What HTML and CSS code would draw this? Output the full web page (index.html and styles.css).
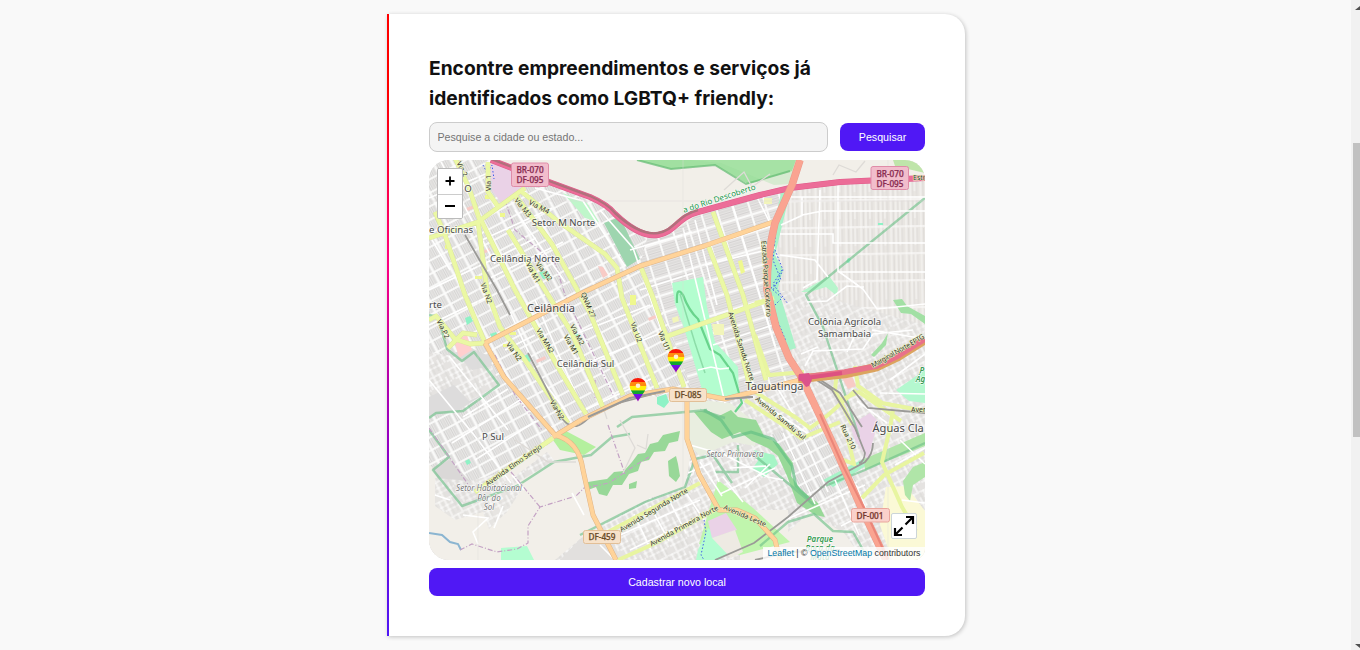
FILE: index.html
```html
<!DOCTYPE html>
<html lang="pt-BR">
<head>
<meta charset="utf-8">
<title>Mapa LGBTQ+ friendly</title>
<link rel="stylesheet" href="styles.css">
</head>
<body>
<div class="page">
<main class="content">
<section class="card">
<h2 class="title">Encontre empreendimentos e serviços já identificados como LGBTQ+ friendly:</h2>
<form class="search">
<input class="search-input" type="text" placeholder="Pesquise a cidade ou estado...">
<button class="button search-button" type="button">Pesquisar</button>
</form>
<div class="map">
<svg class="map-canvas" viewBox="429 160 496 400" width="496" height="400">
<defs>
<pattern id="blocksWest" width="17" height="12" patternUnits="userSpaceOnUse" patternTransform="rotate(-28)">
<rect width="17" height="12" fill="#fdfdfc"/><path d="M.8 .8h15.400v10.400H.8z" fill="#eae9e8"/><path d="M2.500 1v10M4.800 1v10M7.100 1v10M9.400 1v10M11.700 1v10M14 1v10" stroke="#d0cfce" stroke-width=".9"/>
</pattern>
<pattern id="blocksMid" width="16" height="17" patternUnits="userSpaceOnUse" patternTransform="rotate(-17)">
<rect width="16" height="17" fill="#fafaf9"/><path d="M1 1h14v15H1z" fill="#e6e4e3"/><path d="M1 3.500h14M1 6h14M1 8.500h14M1 11h14M1 13.500h14" stroke="#d0cfce" stroke-width=".8"/>
</pattern>
<pattern id="blocksEast" width="15" height="27" patternUnits="userSpaceOnUse" patternTransform="rotate(-1)">
<rect width="15" height="27" fill="#e9e6e2"/><path d="M2 0v27M7 0v27M11 0v18" stroke="#fbfbfa" stroke-width=".8"/><path d="M4.500 1v24M9 1v24M13 1v24" stroke="#dad8d6" stroke-width=".8"/><path d="M0 26h15" stroke="#fff" stroke-width="1"/>
</pattern>
<pattern id="blocksLoose" width="23" height="19" patternUnits="userSpaceOnUse" patternTransform="rotate(-27)">
<rect width="23" height="19" fill="#e5e3e1"/><path d="M0 1h23M0 7h15M4 12h19M2 0v12M8 1v18M14 0v8M19 6v13" stroke="#fff" stroke-width="1" fill="none"/><path d="M5 2v9M11 2v16M16 8v9M21 1v17" stroke="#d6d4d3" stroke-width=".7"/>
</pattern>
<linearGradient id="rainbow" x1="0" y1="0" x2="0" y2="1">
<stop offset=".17" stop-color="#fa1a08"/><stop offset=".19" stop-color="#ff8a10"/><stop offset=".34" stop-color="#ff8a10"/><stop offset=".36" stop-color="#fff00a"/><stop offset=".52" stop-color="#fff00a"/><stop offset=".54" stop-color="#12a62f"/><stop offset=".67" stop-color="#12a62f"/><stop offset=".69" stop-color="#6b12f0"/><stop offset="1" stop-color="#9b00b0"/>
</linearGradient>
<g id="pin"><path d="M0 11.500C-2 7-8.300 1-8.300-4C-8.300-9-4.500-12 0-12S8.300-9 8.300-4C8.300 1 2 7 0 11.500Z" fill="url(#rainbow)"/><circle cy="-4.300" r="2.300" fill="#fff0d8"/></g>
</defs>

<!-- built-up areas -->
<path d="M429 160h496v400H429z" fill="url(#blocksWest)"/>
<path d="M648 235L710 205 790 187 768 250 772 325 800 378 760 425 725 405 692 390 670 330 640 265z" fill="url(#blocksMid)"/>
<path d="M782 189L925 179V340L850 368 802 374 782 345 770 290z" fill="url(#blocksEast)"/>
<path d="M770 290L810 293 925 325V340L860 368 802 374z" fill="url(#blocksLoose)" opacity=".8"/>
<path d="M735 398L802 378 925 340V560H690V500L700 430z" fill="url(#blocksLoose)"/>
<path d="M770 435l44-15 45 65-48 22z" fill="url(#blocksWest)"/>
<path d="M429 360l42-12 18 8 10 29-40 25-30 7z" fill="#dddcdc"/>
<path d="M429 352l30 5 13 13 20-4 7 20-30 15-15-16-25 12z" fill="url(#blocksLoose)"/>

<!-- open land -->
<path d="M490 160H925V178L790 187 700 211Q675 237 650 233 630 226 610 206 570 190 530 177z" fill="#f2efe9"/>
<path d="M438 160h56l8 15-8 12-10-5z" fill="url(#blocksWest)"/>
<path d="M429 465L475 494 555 440 590 415 640 395 690 400V458L685 488 650 498 590 532 560 560H429z" fill="#f2efe9"/>
<path d="M432 468l18-8 32 34-10 10-19 3z" fill="#dad8d7"/>
<path d="M435 478l35 3 30-8 22 16-15 23-18 17-6-17-28 8-20-14z" fill="url(#blocksLoose)" opacity=".85"/>
<path d="M510 480l37-28 8 9-45 25z" fill="url(#blocksLoose)"/>
<path d="M555 560l30-25 65-35 40-15 30 25 10 50z" fill="url(#blocksLoose)"/>
<path d="M560 560l20-21 30-8 10 29z" fill="#e2e0de"/>
<path d="M690 399l40 4 30 23-5 20-22-4-33 14-12-12z" fill="#e9eee0"/>
<path d="M740 510l48 0 0 22 22-20 35 22 18 26H740z" fill="#f2efe9"/>
<path d="M886 487l20-1 19 25v49h-33l-12-35z" fill="#fbf9d6"/>
<path d="M896 390l29-20v33l-16-2z" fill="#b4f8cf"/>
<path d="M490 163l22 6 13 18-23 17-11-15z" fill="#ead2e7"/>
<path d="M604 223l16-6 20 42-13 8z" fill="#9ed5af"/>
<path d="M637 160l34 9 44-4 33 19 44-13 4-11z" fill="#a1e0a1"/>
<path d="M690 160h106l-6 24-16 1-53-22z" fill="#b0e5ad" opacity=".4"/>
<path d="M637 160l34 9 44-4 31 19 44-13" fill="none" stroke="#68bd77" stroke-width="2" opacity=".75"/>
<path d="M893 160h24l8 9v4l-30-7z" fill="#bfe5aa"/>
<path d="M563 193l24 10 12 19-14-4z" fill="#bff6ca"/>
<path d="M782 189l7 8-14 58 8 15-5 18 18 60-9 3-18-51v-55z" fill="#aaf2c9"/>
<path d="M801 292l28-16 9 12-1 8-11-9-16 5z" fill="#b7f5cc"/>
<path d="M672 283l31-6 4 30 8 35 23 25 1 29-18 5-18-8-18-62-10-27z" fill="#b3fdcf"/>
<path d="M677 303q-1-18 6-8 6 16 15 24l12 30 10 6 13 18 9 30-7 9" fill="none" stroke="#69d48c" stroke-width="2.200"/>
<path d="M680 294l15 49 10 30" fill="none" stroke="#8cdda8" stroke-width="1.500"/>
<path d="M698 370l13-3 9 2 9-1" fill="none" stroke="#fff" stroke-width="1.500"/>
<path d="M694 412l12-2 13 6 12-6 7 7 18 3 8 16 15 8 14 19-2 13 10 14 17 13 7 14-10-2-18-12-10-27-9-20-10-8-16-7-12-9-18 7-11-7-7-8z" fill="#98d998"/>
<path d="M704 410l17 10 12 17 18-5 22 7 19 27 4 20 14 14" fill="none" stroke="#65c185" stroke-width="3" opacity=".7"/>
<path d="M754 450l20 5 4 9-14 13-12-8 6-8z" fill="#a6f5c6"/>
<path d="M588 482l12-2 7-1 7-7 10-1 8-9 6-8 7-1 5-9 8-2 5-7 17-4-2 10-9 2-4 8-11 1-5 8-8 2-3 9-9 3-7 11-9 0-6 11-8-2-3-7-8 3zM668 461l8-5 2 8 2 12-4 6-7-6zM629 484l8-3-1 7-7 1z" fill="#98d898"/>
<path d="M553 440l13-9 30 16-12 8-24-5z" fill="#b4f09e"/>
<path d="M501 548l26-2 7 14h-33z" fill="#b4fdd1"/>
<path d="M718 480l35 28 37 34-50 13-41-11z" fill="#c0f5ad"/>
<path d="M698 550l10-22 27 20-16 12h-23z" fill="#b4fdd1"/>
<path d="M708 521l18-8 11 17-25 8z" fill="#ead2e7"/>
<path d="M712 538l23-8 8 22-12 6z" fill="#eeeae3"/>
<path d="M823 480l40-21 7 4-37 24z" fill="#a7f3c8"/>
<path d="M864 459l61-26v13l-60 24zM903 481l10-14 12-5v15l-12 8-3 16-5-6z" fill="#b0e5a8"/>
<path d="M850 425l20-12 8 8-10 38-13-19z" fill="#ead2e7"/>
<path d="M454 340l13-5 5 15-13 8z" fill="#ffcfce"/>
<path d="M882 343l6-10-2 12-12 12-3-2zM893 300l9-1 5 7 18 10v8l-14-10-10-1z" fill="#a2e0a4"/>
<g fill="#8ef2c6"><path d="M539 272l9-1 2 7-7 1zM465 318l5-2 3 5-6 4zM490 334l6-2 3 5-6 4zM522 357l6-3 3 7-6 3zM569 331l7-3 3 8-7 4zM657 397l9-3 3 8-5 6-7-4zM861 179h3v3h-3zM878 223h5v2h-5zM848 258l3 1-2 4-3-1zM465 461l4-2 2 4-4 2z"/></g>
<g fill="#eff88f"><path d="M455 175h6v4h-6zM485 195h7v4h-7zM500 213h5v4h-5zM445 245h6v4h-6zM475 276h7v3h-7zM510 332h6v3h-6zM630 295h6v10h-6zM738 261l4-1 3 12-4 2zM503 344h6v3h-6z"/></g>
<path d="M712 324h12v11h-10zM764 198h8v6h-8zM672 318l6-2 1 5-6 2z" fill="#f2f5ba"/>
<g fill="#f8cbc6"><path d="M466 208l11-4 1 3-11 4zM480 252l9-4 1 3-9 4zM538 309l11-4 1 3-11 4zM536 360l9-4 1 3-9 4zM598 266l5 1 5 8-5 3zM648 318l10-4 1 3-10 4zM842 378l10-2 4 10-8 3z"/></g>

<!-- protected area limits -->
<g fill="none" stroke="#72c28c" stroke-width="2.400" opacity=".65" stroke-linejoin="round">
<path d="M429 315l9 2 9 32 15 12 12-9 25 33-36 26-27 2-7 5"/>
<path d="M429 430l20 27-16 13 29 36 55-20 37-24 37-7 21-18 18-3M617 427l15-10 75-7M580 535l65-33 40-15 10-28 18-4 19 28M700 410l25 8M760 546l28-24 26-8 19 17 20 1 13 23M754 455l60 50"/>
<path d="M925 198L806 295l17 32 36 110M925 443L865 470l-45 18M738 445v27h-23"/>
</g>
<path d="M429 533l13 2 8 7 8 2 3 6" fill="none" stroke="#8bb5d1" stroke-width="2"/>
<g fill="none" stroke="#c3a1c4" stroke-width="1.200" stroke-dasharray="5 2 1 2">
<path d="M460 550l12-6 25 8 20-3 11-6 0-17 12-19 36-11 8-8 25-5 22-15 18-11M511 472l29 35M429 428l43 62M595 380v20M495 355l20 40 27 35M608 425l17 49M505 200l10 30 40 33 10 32 48 100"/>
</g>
<g fill="none" stroke="#4160e8" stroke-width="1" stroke-dasharray="1.500 2"><path d="M777 220l-4 40 8 20-10 8 11 10-10 10 14 33M782 270l-9 14 15 20M704 520l2 12-5 23 3 5"/><path d="M483 165l4 8 5-8 2 14M775 250l8 20-10 20"/></g>

<!-- side streets -->
<g fill="none" stroke="#fff" stroke-width="1.600">
<path d="M429 198l59-25M429 290l71-34 36-18M440 160l55 104M450 270l-21-35M482 240l70-32M490 278l73-36M515 210l50 72M535 188l48 13 42 65M429 325l58-28M449 356l59 74M463 417l45-28M429 380l45 55 37 48M452 443l68-43M475 460l61-39M505 350l30-15M510 312l30 65 25 33M535 300l48 110M560 340l90-35M570 370l93-38M585 410l70-33M600 210l33 38 30 87M630 250l62-18M640 290l54-17M683 228l42 175M695 220l22 85M733 206l42 140M757 197l15 30M705 265l70-17M713 345l60-20"/>
<path d="M790 197h135M802 197v18l20-4h103M780 234h53v9h92M838 179v92l25 18 14 20 48-5M838 272h87M820 190l-3 90-14 8M803 215l-22 10M780 255l35 5 13 17M807 302l20-1 20-15 17 1M805 366l8-15 50-2 10-15 40-4M818 347l-17 7M847 352l10-21M872 330l53 9M890 380l35-26M862 392l33 28M857 401l30 22M880 393l45 1"/>
<path d="M783 433l32 71M798 426l30 66M765 405l45 30 15-5M756 391l25 35M775 384l23 38M785 520l80-35M835 480l24 55M856 485l25 60M870 511l-29 15M900 440l25 24M895 465l30-17M902 500l23 3M690 445l35 10 43 22 15 3M745 488l25-24M730 468l36-2M723 477l20 25M720 494l55-26M634 514l17 36M650 506l19 35M668 498l18 35M684 490l20 30M620 535l80-35M630 550l77-37M600 545l15 15M688 473l23-10 8 19M700 462l22 34M512 475l12 15M503 506l-9 22M463 515l25 3-15 14 5 12M450 500l-15-5M584 515l-12-22"/>
</g>
<g fill="none" stroke="#dedbd7" stroke-width="1.300"><path d="M429 201h254M683 160v400M683 201h242M888 160v400M478 160v400" opacity=".3"/><path d="M620 420l15 28-12 25M637 445l9 4 2-15M515 440l33 22 28 0M590 390l12 14 5 15M724 190l20-18 8 15 18-13M833 175l6-10 17 7 9-11"/></g>

<!-- avenues -->
<path d="M455 158l14 30 11 33M488 162v30l11 16M429 238l49-16 37-27 10-7M435 212l10 23 20 60 20 48M478 222l9 68 13 37 25 33 43 63M480 218l35 72 43 77 28 47M508 230l37 60 27 43 32 77M515 195l37 49 38 69 33 82M522 192l37 30 46 32 12 14 5 30 35 90M640 265l12 30 32 92M708 245l19 50 23 92M713 212l30 83 23 85M665 337l95-34 14-5M429 320l7-4 19 23 15 5 15-1M448 348l15-15 14 2M475 492l78-54" fill="none" stroke="#dbe69b" stroke-width="4.800" stroke-linejoin="round"/>
<path d="M455 158l14 30 11 33M488 162v30l11 16M429 238l49-16 37-27 10-7M435 212l10 23 20 60 20 48M478 222l9 68 13 37 25 33 43 63M480 218l35 72 43 77 28 47M508 230l37 60 27 43 32 77M515 195l37 49 38 69 33 82M522 192l37 30 46 32 12 14 5 30 35 90M640 265l12 30 32 92M708 245l19 50 23 92M713 212l30 83 23 85M665 337l95-34 14-5M429 320l7-4 19 23 15 5 15-1M448 348l15-15 14 2M475 492l78-54" fill="none" stroke="#ebf8a4" stroke-width="4"/>
<g fill="none" stroke="#e8f5a0" stroke-width="4"><path d="M755 303l13-3M755 335l14 40 35-3M755 392l40 25 15 11 18-13 28-25M802 438l38-16M745 400l43 28 14 11M855 366l3 20 24 17 43 8M837 370l-2 20 17 35M840 400l19-8 42 29M893 410l-3 18-8 34 20 45 14 24M862 498l22-23 40-22M608 532l92-49M618 560l40-18 58-33M825 428l16 31 13 5-6-25"/></g>

<!-- railways -->
<path d="M465 235l32 55 13 25M528 353l29 56q7 18 20 17c11-3 14-16 34-21l54-14M725 398l28-1M812 377l20 13 23 38 10 25q-1 9-6 10M816 377l24 16 22 34M715 560l39-17 34-26 40-35 37-20q8-8 8-19M853 390l15 18 57 5M755 560l35-8 50-2" fill="none" stroke="#9b9a97" stroke-width="1.800"/>

<!-- highways -->
<g fill="none" stroke-linejoin="round">
<g stroke="#dfb488" stroke-width="5"><path d="M485 343l101-52 54-25 64-20 69-24M485 343l19 34 51 58M553 437l28-17 49-24 43-7 52 10 67-17 16-4M687 394v45l12 35 20 36h18l18 8 20 22 5 20M555 435q24 6 28 35l10 45 23 45"/></g>
<g stroke="#ffd399" stroke-width="4"><path d="M485 343l101-52 54-25 64-20 69-24M485 343l19 34 51 58M553 437l28-17 49-24 43-7 52 10 67-17 16-4M687 394v45l12 35 20 36h18l18 8 20 22 5 20M555 435q24 6 28 35l10 45 23 45"/></g>
<path d="M588 417l42-19 35-7M725 399l27-2" stroke="#999" stroke-width="2"/>
<path d="M491 160l39 15 60 22q18 8 25 17 25 24 43 21c17-3 20-18 40-23l62-17 30-7 50-6 85-4" stroke="#e05a8a" stroke-width="6"/>
<path d="M491 160l39 15 60 22q18 8 25 17 25 24 43 21c17-3 20-18 40-23l62-17 30-7 50-6 85-4" stroke="#ec6d98" stroke-width="5"/>
<path d="M491 159l39 15 60 22q18 8 25 17 25 23 43 20c17-3 20-18 40-23" stroke="#b0707c" stroke-width="2.400"/>
<path d="M800 160l-8 25-17 38q-8 32-8 67l9 37 13 31 13 20 33 70 25 57 26 55" stroke="#ea9a8c" stroke-width="7.500"/>
<path d="M800 160l-8 25-17 38q-8 32-8 67l9 37 13 31 13 20 33 70 25 57 26 55" stroke="#faa491" stroke-width="6.500"/>
<path d="M820 414l23 52 23 46 22 48" stroke="#df7169" stroke-width="2" opacity=".6"/>
<path d="M798 379l47-5 32-7 21-10 27-17" stroke="#dca45f" stroke-width="8.500"/>
<path d="M798 378l47-6 32-6 21-10 27-17" stroke="#e8718a" stroke-width="5.500"/>
<path d="M799 379l43-6" stroke="#dd5281" stroke-width="4"/>
<path d="M799 374l10-1 3 7-3 6-3 1-7-9z" fill="#db528b"/>
</g>

<!-- road shields -->
<g class="shield shield-pink"><rect x="511.500" y="163" width="37" height="23.500" rx="2"/><rect x="871" y="166.500" width="37.500" height="23" rx="2"/><text x="530" y="173">BR-070</text><text x="530" y="182.800">DF-095</text><text x="890" y="177.200">BR-070</text><text x="890" y="187">DF-095</text></g>
<g class="shield shield-tan"><rect x="669.500" y="388.500" width="37" height="13" rx="2"/><rect x="583.500" y="530.500" width="37" height="13" rx="2"/><text x="688" y="398">DF-085</text><text x="602" y="540">DF-459</text></g>
<g class="shield shield-red"><rect x="851.500" y="508.500" width="38" height="13.500" rx="2"/><text x="870" y="518.500">DF-001</text></g>

<!-- place names -->
<g class="place">
<text x="563.500" y="225.500">Setor M Norte</text><text x="525" y="262">Ceilândia Norte</text><text class="large" x="551" y="311.500">Ceilândia</text><text x="585.500" y="366.500">Ceilândia Sul</text><text x="493" y="440">P Sul</text><text x="844.500" y="324.500">Colônia Agrícola</text><text x="844.500" y="337">Samambaia</text><text class="large" x="774.500" y="390">Taguatinga</text><text class="large start" x="872.500" y="431.500">Águas Cla</text><text class="start" x="429" y="233">e Oficinas</text><text class="start" x="429" y="308">rte</text><text x="468" y="191.500">O</text>
</g>
<g class="suburb"><text x="735" y="457">Setor Primavera</text><text x="489" y="491">Setor Habitacional</text><text x="489" y="500.500">Pôr do</text><text x="489" y="510">Sol</text></g>
<g class="park"><text x="820" y="542">Parque</text><text x="820" y="550.500">Boca da</text><text x="820" y="559.500">Mata</text><text x="922" y="373">P</text><text x="920.500" y="382">Ág</text></g>
<g class="street">
<text transform="translate(491 183) rotate(-90)">Via 1</text><text transform="translate(460 170) rotate(63)">Via 2</text><text transform="translate(521 209) rotate(51)">Via M3</text><text transform="translate(538 209) rotate(28)">Via M4</text><text transform="translate(531 274) rotate(61)">Via M1</text><text transform="translate(542 273) rotate(52)">Via M2</text><text transform="translate(484 294) rotate(70)">Via N2</text><text transform="translate(441 330) rotate(64)">Via P2</text><text transform="translate(512 353) rotate(54)">Via N2</text><text transform="translate(543 342) rotate(59)">Via MN2</text><text transform="translate(569 346) rotate(60)">Via M1</text><text transform="translate(575 336) rotate(61)">Via M2</text><text transform="translate(586 306) rotate(67)">QNM 27</text><text transform="translate(634 333) rotate(70)">Via U2</text><text transform="translate(662 342) rotate(67)">Via U1</text><text transform="translate(555 411) rotate(60)">Via N2</text>
<text transform="translate(739 347) rotate(72)">Avenida Samdu Norte</text><text transform="translate(779 420) rotate(40)">Avenida Samdu Sul</text><text transform="translate(846 438) rotate(64)">Rua 210</text><text transform="translate(515 467) rotate(-35)">Avenida Elmo Serejo</text><text transform="translate(655 512) rotate(-31)">Avenida Segunda Norte</text><text transform="translate(685 528) rotate(-29)">Avenida Primeira Norte</text><text transform="translate(744 518) rotate(23)">Avenida Leste</text><text transform="translate(899 353) rotate(-30)" textLength="60">Marginal Norte EPTG</text><text transform="translate(764 279) rotate(86)" textLength="76">Estrada Parque Contorno</text><text class="start" x="911" y="412">Aven</text><text class="start" x="913" y="180">Estr</text>
</g>
<text class="basin" transform="translate(720 201) rotate(-18)">a do Rio Descoberto</text>

<use href="#pin" x="676" y="361"/><use href="#pin" x="638" y="390"/>
</svg>
<div class="zoom-control"><button type="button" aria-label="Aproximar"><svg width="12" height="12"><path d="M6 1.500v9M1.500 6h9"/></svg></button><button type="button" aria-label="Afastar"><svg width="12" height="12"><path d="M1 6h10"/></svg></button></div>
<button class="expand" type="button" aria-label="Tela cheia"><svg width="22" height="22" viewBox="0 0 22 22"><path d="M12.500 9.500L19.500 2.500M13 2h7v7M9.500 12.500L2.500 19.500M2 13v7h7"/></svg></button>
<div class="attribution"><a>Leaflet</a> | © <a>OpenStreetMap</a> contributors</div>
</div>
<button class="button register" type="button">Cadastrar novo local</button>
</section>
</main>
<div class="scrollbar"><span class="arrow-up"></span><span class="thumb"></span><span class="arrow-down"></span></div>
</div>
</body>
</html>
```

FILE: styles.css
```css
* { box-sizing: border-box; }
body { margin: 0; overflow: hidden; background: #f9f9f9; font-family: Inter, sans-serif; }
.page { display: flex; height: 650px; }
.content { flex: 1; padding-top: 14px; display: flex; justify-content: center; align-items: flex-start; }
.card {
  width: 578px; height: 622px; padding: 39px 40px 40px 42px; margin-left: 1px;
  background: linear-gradient(to bottom, #ff0000, #ff0000 12%, #ff0080 40%, #b000b0 60%, #7a00d8 78%, #5018f5) left / 2px 100% no-repeat, #fff;
  border-radius: 0 20px 20px 0; box-shadow: 1px 1px 4px rgba(0, 0, 0, .22);
}
.title { margin: 0 0 9px; color: #111; font-size: 19.2px; line-height: 30px; font-weight: 700; }
.search { display: flex; align-items: center; gap: 12px; margin-bottom: 8px; }
.search-input {
  flex: 1; height: 30px; padding: 0 7.5px; border: 1px solid #ccc; border-radius: 8px;
  background: #f4f4f4; font: 10.67px "Liberation Sans", Arial, sans-serif;
}
.search-input::placeholder { color: #757575; }
.button {
  height: 28px; padding: 0; border: 0; border-radius: 8px; color: #fff;
  background: #5018f5; font: 10.67px "Liberation Sans", Arial, sans-serif;
}
.search-button { width: 85px; }
.register { display: block; width: 100%; }
.map { position: relative; height: 400px; margin-bottom: 8px; border-radius: 20px 20px 12px 20px; overflow: hidden; background: #ddd; }
.map-canvas { display: block; font-family: "Noto Sans", sans-serif; }
.map-canvas text { text-anchor: middle; }
.place text { font-size: 9.6px; fill: #4a4a4a; stroke: #fff; stroke-width: 2px; stroke-opacity: .6; paint-order: stroke; }
.place .large { font-size: 11.1px; }
.map-canvas .start { text-anchor: start; }
.street { font-size: 7px; fill: #30302a; stroke: #eff6c9; stroke-width: 1px; paint-order: stroke; }
.suburb { font-size: 8px; font-style: italic; fill: #777; stroke: #fff; stroke-width: 1px; paint-order: stroke; }
.park { font-size: 8px; font-style: italic; font-weight: 600; fill: #359b50; stroke: #fff; stroke-width: 1px; paint-order: stroke; }
.basin { font-size: 8px; fill: #159445; stroke: #fff; stroke-width: 1px; paint-order: stroke; }
.shield text { font-size: 8.2px; font-weight: 500; stroke-width: .25px; }
.shield-pink rect { fill: #f2bdcc; stroke: #df8ca8; }
.shield-pink text { fill: #882a50; stroke: #882a50; }
.shield-tan rect { fill: #f7e2ca; stroke: #e2bf97; }
.shield-tan text { fill: #6b4c28; stroke: #6b4c28; }
.shield-red rect { fill: #fad1cb; stroke: #eaa69c; }
.shield-red text { fill: #76362c; stroke: #76362c; }
.zoom-control {
  position: absolute; left: 8px; top: 8px; width: 26px; height: 51px;
  display: grid; grid-template-rows: 25px 24px; border: 1px solid #bbb; border-radius: 2px; overflow: hidden;
}
.zoom-control button { display: grid; place-items: center; padding: 0 1px 2px 0; border: 0; background: #fff; }
.zoom-control button + button { border-top: 1px solid #ccc; }
.zoom-control path { stroke: #000; stroke-width: 1.8; fill: none; }
.expand {
  position: absolute; right: 8px; bottom: 21px; width: 26px; height: 26px; padding: 0;
  display: grid; place-items: center; border: 1px solid #ccd5d8; border-radius: 2px; background: #fff;
}
.expand path { stroke: #000; stroke-width: 2.2; fill: none; }
.attribution {
  position: absolute; right: 0; bottom: 0; padding: 0 4.5px 0 4px; height: 13px;
  background: rgba(255, 255, 255, .8); color: #333; font: 8.8px/13px "Liberation Sans", Arial, sans-serif;
}
.attribution a { color: #0078a8; }
.scrollbar { width: 9px; display: flex; flex-direction: column; align-items: flex-end; background: #f1f1f1; overflow: hidden; }
.arrow-up, .arrow-down { width: 5px; height: 4px; background: #505050; }
.arrow-up { margin: 6px 0 133px; clip-path: polygon(100% 0, 100% 100%, 0 100%); }
.thumb { width: 7px; height: 294px; background: #c1c1c1; }
.arrow-down { margin-top: 207px; clip-path: polygon(0 0, 100% 0, 100% 100%); }
```
